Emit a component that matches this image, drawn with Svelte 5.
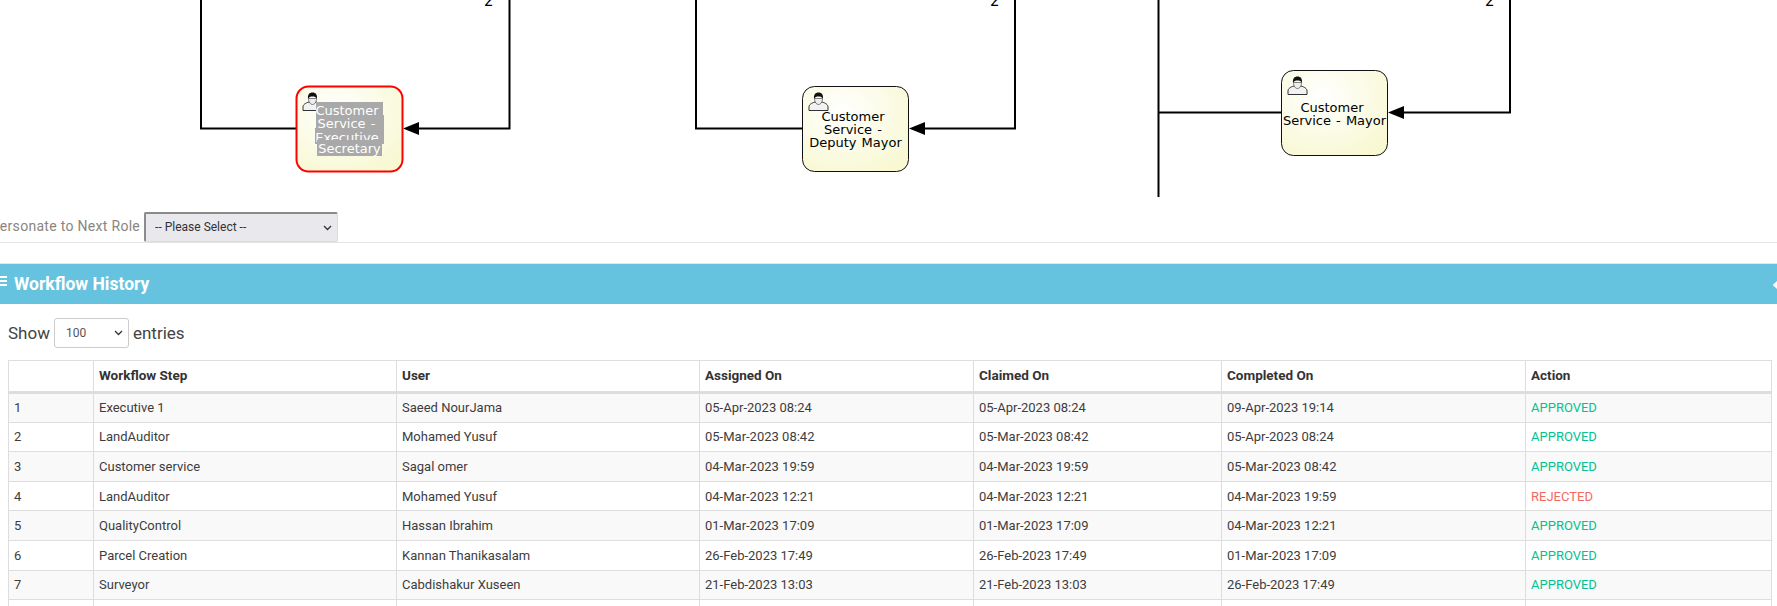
<script>
  const nodes = [
    { x: 296.5, y: 86.5, base: 0, lines: [], active: true },
    { x: 802.5, y: 86.5, base: 34, lines: ["Customer", "Service -", "Deputy Mayor"] },
    { x: 1281.5, y: 70.5, base: 41, lines: ["Customer", "Service - Mayor"] }
  ];

  const selected = [
    { text: "Customer", x: 316, y: 102, w: 67, h: 13, cx: 347, base: 115 },
    { text: "Service -", x: 316, y: 115, w: 68, h: 13, cx: 346.5, base: 128 },
    { text: "Executive", x: 315, y: 128, w: 69, h: 16, cx: 347, base: 142 },
    { text: "Secretary", x: 317, y: 140, w: 65, h: 16, cx: 349.5, base: 153 }
  ];

  const columns = ["", "Workflow Step", "User", "Assigned On", "Claimed On", "Completed On", "Action"];

  const rows = [
    [1, "Executive 1", "Saeed NourJama", "05-Apr-2023 08:24", "05-Apr-2023 08:24", "09-Apr-2023 19:14", "APPROVED"],
    [2, "LandAuditor", "Mohamed Yusuf", "05-Mar-2023 08:42", "05-Mar-2023 08:42", "05-Apr-2023 08:24", "APPROVED"],
    [3, "Customer service", "Sagal omer", "04-Mar-2023 19:59", "04-Mar-2023 19:59", "05-Mar-2023 08:42", "APPROVED"],
    [4, "LandAuditor", "Mohamed Yusuf", "04-Mar-2023 12:21", "04-Mar-2023 12:21", "04-Mar-2023 19:59", "REJECTED"],
    [5, "QualityControl", "Hassan Ibrahim", "01-Mar-2023 17:09", "01-Mar-2023 17:09", "04-Mar-2023 12:21", "APPROVED"],
    [6, "Parcel Creation", "Kannan Thanikasalam", "26-Feb-2023 17:49", "26-Feb-2023 17:49", "01-Mar-2023 17:09", "APPROVED"],
    [7, "Surveyor", "Cabdishakur Xuseen", "21-Feb-2023 13:03", "21-Feb-2023 13:03", "26-Feb-2023 17:49", "APPROVED"]
  ];
</script>

<div class="page">
  <div class="diagram">
    <svg width="1777" height="197" viewBox="0 0 1777 197">
      <defs>
        <radialGradient id="taskFill" cx="38%" cy="30%" r="80%">
          <stop offset="0" stop-color="#ffffff" />
          <stop offset="1" stop-color="#f8f8d2" />
        </radialGradient>
      </defs>

      <path class="flow" d="M201 0V128.5H297" />
      <path class="flow" d="M509.5 0V128.5H410" />
      <path class="flow" d="M696 0V128.5H803" />
      <path class="flow" d="M1015 0V128.5H916" />
      <path class="flow" d="M1158.5 0V197M1158.5 112.5H1282" />
      <path class="flow" d="M1510 0V112.5H1395" />

      <polygon points="403,128.5 419,122 419,135" />
      <polygon points="909,128.5 925,122 925,135" />
      <polygon points="1388,112.5 1404,106 1404,119" />

      <text class="edge-label" x="484" y="6">2</text>
      <text class="edge-label" x="990" y="6">2</text>
      <text class="edge-label" x="1485" y="6">2</text>

      {#each nodes as node}
        <rect
          class="task"
          class:active={node.active}
          x={node.x}
          y={node.y}
          width="106"
          height="85"
          rx="12"
          fill="url(#taskFill)"
        />
        <g transform="translate({node.x + 6} {node.y + 5.5})">
          <path class="person-body" d="M.5 18.5V15C.5 12.5 3 11 6.5 10L13.5 10C17 11 19.5 12.5 19.5 15V18.5Z" />
          <path class="person-face" d="M6 6.5C6 10.5 8 12.5 10 12.5S14 10.5 14 6.5Z" />
          <path class="person-hair" d="M5.5 7C5 2.5 7 .5 10 .5S15 2.5 14.5 7C13.5 5 12 4.5 10 4.5S6.5 5 5.5 7Z" />
        </g>
        {#each node.lines as line, n}
          <text
            class="task-label"
            x={node.x + (n === node.lines.length - 1 ? 53 : 50.5)}
            y={node.y + node.base + n * 13}>{line}</text>
        {/each}
      {/each}

      {#each selected as line}
        <rect class="selection" x={line.x} y={line.y} width={line.w} height={line.h} />
        <text class="task-label selected" x={line.cx} y={line.base}>{line.text}</text>
      {/each}
    </svg>
  </div>

  <div class="role-row">
    <label for="next-role">Impersonate to Next Role</label>
    <select id="next-role">
      <option>-- Please Select --</option>
    </select>
  </div>

  <div class="panel-head">
    <span class="menu-icon"><i></i><i></i><i></i></span>
    <h3>Workflow History</h3>
    <span class="collapse-icon"></span>
  </div>

  <div class="length-row">
    <span>Show</span>
    <select aria-label="entries">
      <option>100</option>
    </select>
    <span>entries</span>
  </div>

  <table>
    <colgroup>
      <col style="width: 85px" />
      <col style="width: 303px" />
      <col style="width: 303px" />
      <col style="width: 274px" />
      <col style="width: 248px" />
      <col style="width: 304px" />
      <col />
    </colgroup>
    <thead>
      <tr>
        {#each columns as col}
          <th>{col}</th>
        {/each}
      </tr>
    </thead>
    <tbody>
      {#each rows as row}
        <tr>
          {#each row as cell, c}
            <td class:ok={c === 6 && cell === "APPROVED"} class:bad={c === 6 && cell === "REJECTED"}>{cell}</td>
          {/each}
        </tr>
      {/each}
      <tr>
        {#each columns as col}
          <td>&nbsp;</td>
        {/each}
      </tr>
    </tbody>
  </table>
</div>

<style>
  :global(body) {
    margin: 0;
    background: #fff;
    overflow: hidden;
  }

  .page {
    width: 1777px;
    height: 606px;
    overflow: hidden;
    font-family: Roboto, "Liberation Sans", sans-serif;
    color: #3d3d3d;
  }

  .diagram {
    height: 197px;
  }

  .diagram svg {
    display: block;
  }

  .flow {
    fill: none;
    stroke: #000;
    stroke-width: 2;
  }

  .edge-label {
    font-family: "DejaVu Sans", sans-serif;
    font-size: 15px;
    fill: #000;
  }

  .task {
    stroke: #111;
    stroke-width: 1;
  }

  .task.active {
    stroke: #ff0000;
    stroke-width: 2;
  }

  .person-body {
    fill: #f2f2f2;
    stroke: #333;
    stroke-width: 1;
  }

  .person-face {
    fill: #eee;
    stroke: #333;
    stroke-width: 0.6;
  }

  .person-hair {
    fill: #111;
  }

  .task-label {
    font-family: "DejaVu Sans", sans-serif;
    font-size: 13px;
    word-spacing: 1px;
    text-anchor: middle;
    fill: #000;
  }

  .task-label.selected {
    fill: #fff;
  }

  .selection {
    fill: #a9a9a9;
  }

  .role-row {
    display: flex;
    align-items: flex-start;
    gap: 4px;
    height: 46px;
    margin-bottom: 20px;
    padding-top: 15px;
    border-bottom: 1px solid #e4e4e4;
    box-sizing: border-box;
  }

  .role-row label {
    margin: 6px 0 0 -25px;
    font-size: 14px;
    letter-spacing: 0.3px;
    color: #8a8580;
    white-space: nowrap;
  }

  select {
    appearance: none;
    background-repeat: no-repeat;
    background-image: url("data:image/svg+xml,%3Csvg xmlns='http://www.w3.org/2000/svg' width='9' height='6'%3E%3Cpath d='M1 1l3.5 3.5L8 1' fill='none' stroke='%23333' stroke-width='1.3'/%3E%3C/svg%3E");
  }

  .role-row select {
    width: 194px;
    height: 30px;
    padding: 0 0 2px 9px;
    border-width: 2px 1px 1px 2px;
    border-style: solid;
    border-color: #8b8b8b #dcdcdc #dcdcdc #8b8b8b;
    border-radius: 2px;
    background-color: #e8e8ed;
    background-position: right 5px center;
    font-family: Roboto, sans-serif;
    font-size: 12px;
    color: #333;
  }

  .panel-head {
    position: relative;
    display: flex;
    align-items: center;
    height: 40px;
    border-top: 1px solid #dfe8ea;
    background: #65c3df;
    color: #fff;
  }

  .panel-head h3 {
    margin: 0 0 0 14px;
    font-size: 17.5px;
    font-weight: 700;
  }

  .menu-icon {
    position: absolute;
    left: 0;
    top: 12px;
    display: grid;
    gap: 2px;
  }

  .menu-icon i {
    display: block;
    width: 7px;
    height: 2px;
    background: #fff;
  }

  .collapse-icon {
    position: absolute;
    right: -8px;
    top: 16px;
    width: 7px;
    height: 7px;
    border-left: 3px solid #fff;
    border-top: 3px solid #fff;
    transform: rotate(-45deg);
  }

  .length-row {
    display: flex;
    align-items: center;
    gap: 4px;
    height: 56px;
    padding: 1px 0 0 8px;
    box-sizing: border-box;
    font-size: 17px;
    color: #444;
  }

  .length-row select {
    width: 75px;
    height: 30px;
    padding: 0 0 0 11px;
    border: 1px solid #ccc;
    border-radius: 3px;
    background-color: #fff;
    background-position: right 5px center;
    font-family: Roboto, sans-serif;
    font-size: 12px;
    color: #555;
  }

  table {
    width: 1764px;
    margin-left: 8px;
    border-collapse: collapse;
    table-layout: fixed;
    font-size: 13px;
    color: #3d3d3d;
  }

  th,
  td {
    height: 29.6px;
    padding: 0 4px 0 5px;
    border: 1px solid #ddd;
    box-sizing: border-box;
    text-align: left;
    white-space: nowrap;
  }

  th {
    height: 32px;
    padding-bottom: 2px;
    border-bottom-width: 3px;
    font-size: 13.5px;
    font-weight: 700;
    color: #333;
  }

  tbody tr:nth-child(odd) td {
    background: #f9f9f9;
  }

  td.ok {
    color: #00c292;
  }

  td.bad {
    color: #f4685f;
  }
</style>
